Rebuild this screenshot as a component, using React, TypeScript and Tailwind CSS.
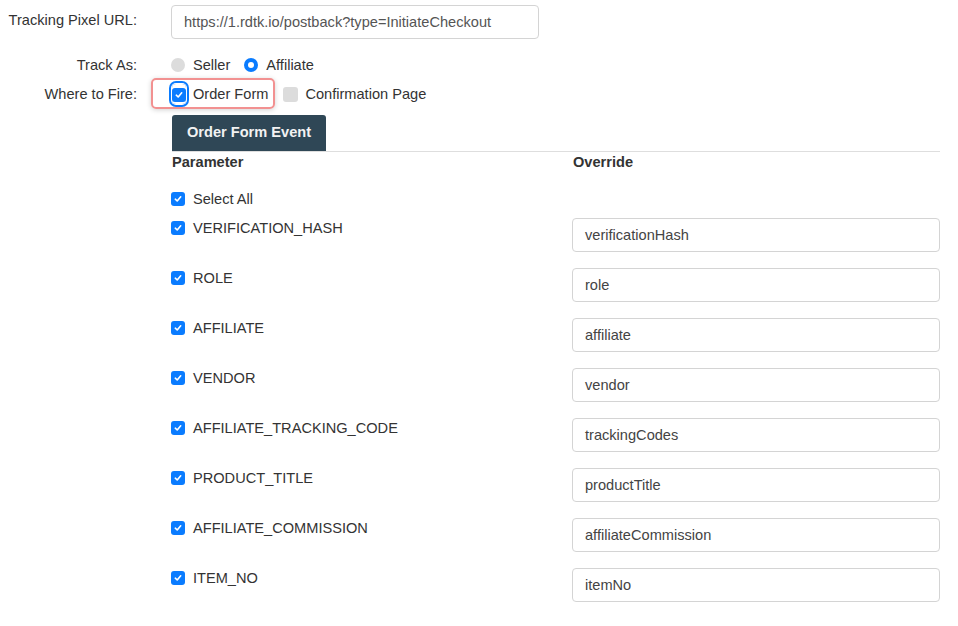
import React from "react";

const Check = ({ size = 14 }: { size?: number }) => (
  <span
    className="inline-flex items-center justify-center rounded-[3px] bg-[#0a7cff] shrink-0"
    style={{ width: size, height: size }}
  >
    <svg width="8" height="8" viewBox="0 0 8 8">
      <path d="M1.3 4.2 L3.2 6 L6.7 1.8" fill="none" stroke="white" strokeWidth="1.6" strokeLinecap="round" strokeLinejoin="round" />
    </svg>
  </span>
);

const rows: [string, string][] = [
  ["VERIFICATION_HASH", "verificationHash"],
  ["ROLE", "role"],
  ["AFFILIATE", "affiliate"],
  ["VENDOR", "vendor"],
  ["AFFILIATE_TRACKING_CODE", "trackingCodes"],
  ["PRODUCT_TITLE", "productTitle"],
  ["AFFILIATE_COMMISSION", "affiliateCommission"],
  ["ITEM_NO", "itemNo"],
];

export default function App() {
  return (
    <div className="w-[958px] h-[626px] bg-white text-[#333] text-[14.6px] leading-[20px] font-['Liberation_Sans',Arial,sans-serif] pt-[5px] overflow-hidden">
      {/* Tracking Pixel URL */}
      <div className="flex items-start">
        <div className="w-[137px] text-right pt-[5px]">Tracking Pixel URL:</div>
        <div className="ml-[34px] w-[368px] h-[34px] border border-[#d4d4d4] rounded-[4px] flex items-center pl-[12px] text-[#555]">
          https://1.rdtk.io/postback?type=InitiateCheckout
        </div>
      </div>

      {/* Track As */}
      <div className="flex items-center mt-[16px] h-[20px]">
        <div className="w-[137px] text-right">Track As:</div>
        <div className="ml-[34px] flex items-center">
          <span className="w-[14px] h-[14px] rounded-full bg-[#dcdcdc]" />
          <span className="ml-[8px]">Seller</span>
          <span className="ml-[14px] w-[14px] h-[14px] rounded-full bg-[#0a7cff] flex items-center justify-center">
            <span className="w-[6px] h-[6px] rounded-full bg-white" />
          </span>
          <span className="ml-[8px]">Affiliate</span>
        </div>
      </div>

      {/* Where to Fire */}
      <div className="flex items-center mt-[9px] h-[20px]">
        <div className="w-[137px] text-right">Where to Fire:</div>
        <div className="ml-[34px] flex items-center relative">
          <span className="absolute left-[-20px] top-[-6px] w-[124px] h-[31px] rounded-[5px] border-2 border-[#f29191] shadow-[0_1px_5px_rgba(0,0,0,0.18)]" />
          <span className="relative ml-[1px] rounded-[4px] ring-2 ring-[#0a7cff] ring-offset-1">
            <Check />
          </span>
          <span className="relative ml-[7px]">Order Form</span>
          <span className="ml-[15px] w-[15px] h-[15px] rounded-[3px] bg-[#dcdcdc]" />
          <span className="ml-[7px]">Confirmation Page</span>
        </div>
      </div>

      {/* Event section */}
      <div className="ml-[172px] w-[768px] mt-[11px]">
        <div className="flex border-b border-[#dedede]">
          <div className="h-[36px] px-[15px] pb-[3px] bg-[#2f4756] text-[#f2f2f2] font-bold rounded-t-[3px] flex items-center">
            Order Form Event
          </div>
        </div>
        <div className="flex font-bold h-[20px]">
          <div className="w-[401px]">Parameter</div>
          <div>Override</div>
        </div>
        <div className="flex items-center mt-[17px] h-[20px] -ml-[1px]">
          <Check />
          <span className="ml-[8px]">Select All</span>
        </div>
        <div className="mt-[9px] flex flex-col gap-[16px]">
          {rows.map(([p, v]) => (
            <div key={p} className="flex items-start">
              <div className="w-[401px] flex items-center h-[20px] -ml-[1px]">
                <Check />
                <span className="ml-[8px]">{p}</span>
              </div>
              <div className="w-[368px] h-[34px] border border-[#d4d4d4] rounded-[4px] flex items-center pl-[12px] text-[#444]">
                {v}
              </div>
            </div>
          ))}
        </div>
      </div>
    </div>
  );
}
